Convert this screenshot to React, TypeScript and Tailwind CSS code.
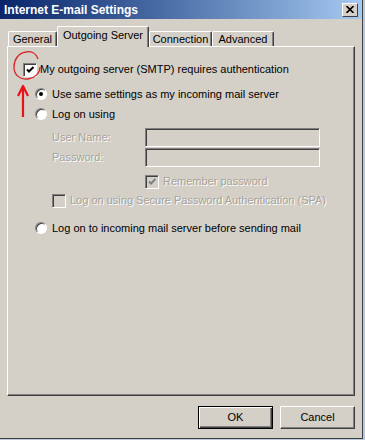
import React from 'react';

const font = { fontFamily: '"Liberation Sans", Arial, sans-serif' };

function CheckBox({ checked, disabled }: { checked?: boolean; disabled?: boolean }) {
  return (
    <div
      className={`relative w-[13px] h-[13px] shrink-0 border-t border-l border-[#808080] shadow-[inset_1px_1px_0_#404040,1px_1px_0_#fff] ${
        disabled ? 'bg-[#d4d0c8]' : 'bg-white'
      }`}
    >
      {checked && (
        <svg viewBox="0 0 12 12" className="absolute inset-0 w-[12px] h-[12px]">
          <path d="M3 5.5 L5 7.5 L9.5 3" stroke={disabled ? '#808080' : '#000'} strokeWidth="2" fill="none" />
        </svg>
      )}
    </div>
  );
}

function Radio({ checked }: { checked?: boolean }) {
  return (
    <div className="relative w-[12px] h-[12px] shrink-0 rounded-full bg-white border border-t-[#808080] border-l-[#808080] border-r-white border-b-white shadow-[inset_1px_1px_0_#404040]">
      {checked && <div className="absolute left-[3px] top-[3px] w-[4px] h-[4px] rounded-full bg-black" />}
    </div>
  );
}

function Field() {
  return (
    <div className="w-[175px] h-[19px] bg-[#d4d0c8] border-t border-l border-[#808080] border-r border-b border-r-white border-b-white shadow-[inset_1px_1px_0_#404040]" />
  );
}

function Tab({ label, w, active }: { label: string; w: string; active?: boolean }) {
  return (
    <div
      className={`${w} flex items-center justify-center border-t border-l border-white border-r border-r-[#404040] rounded-t-[2px] shadow-[inset_-1px_0_0_#808080] ${
        active ? 'h-[21px] -mb-[1px] bg-[#d4d0c8] relative z-10' : 'h-[15px] mt-[5px]'
      }`}
    >
      <span className={active ? 'pb-[3px]' : ''}>{label}</span>
    </div>
  );
}

const dis = 'text-[#a6a29a] [text-shadow:1px_1px_0_#fff]';

export default function App() {
  return (
    <div className="w-[365px] h-[440px] bg-[#b9c9dc] text-[11px] text-black" style={font}>
      <div className="relative w-[363px] h-[439px] bg-[#d4d0c8] border-r border-b border-[#404040] flex flex-col">
        <div className="h-[19px] flex items-center justify-between pl-[4px] pr-[4px] bg-gradient-to-r from-[#0a246a] to-[#a6caf0]">
          <span className="text-white font-bold text-[12px]">Internet E-mail Settings</span>
          <div className="w-[16px] h-[14px] bg-[#d4d0c8] border-t border-l border-white border-r border-b border-r-[#404040] border-b-[#404040] flex items-center justify-center">
            <svg viewBox="0 0 8 7" className="w-[8px] h-[7px]">
              <path d="M0.5 0 L7.5 7 M7.5 0 L0.5 7" stroke="#000" strokeWidth="1.6" />
            </svg>
          </div>
        </div>

        <div className="px-[7px] pt-[7px] flex flex-col">
          <div className="flex pl-[1px] h-[20px] items-start">
            <Tab label="General" w="w-[49px]" />
            <Tab label="Outgoing Server" w="w-[92px]" active />
            <Tab label="Connection" w="w-[63px]" />
            <Tab label="Advanced" w="w-[62px]" />
          </div>

          <div className="relative h-[350px] border-t border-l border-white border-r border-b border-r-[#404040] border-b-[#404040] shadow-[inset_-1px_-1px_0_#808080] pl-[15px] pt-[12px]">
            <div className="flex items-center h-[20px] gap-[4px]">
              <CheckBox checked />
              <span>My outgoing server (SMTP) requires authentication</span>
            </div>

            <div className="pl-[12px] mt-[5px]">
              <div className="flex items-center h-[20px] gap-[5px]">
                <Radio checked />
                <span>Use same settings as my incoming mail server</span>
              </div>
              <div className="flex items-center h-[20px] gap-[5px]">
                <Radio />
                <span>Log on using</span>
              </div>

              <div className="pl-[17px] mt-[3px]">
                <div className="flex items-center h-[20px]">
                  <span className={`w-[93px] ${dis}`}>User Name:</span>
                  <Field />
                </div>
                <div className="flex items-center h-[20px]">
                  <span className={`w-[93px] ${dis}`}>Password:</span>
                  <Field />
                </div>
                <div className="flex items-center h-[19px] gap-[5px] pl-[93px] mt-[5px]">
                  <CheckBox checked disabled />
                  <span className={dis}>Remember password</span>
                </div>
                <div className="flex items-center h-[19px] gap-[5px]">
                  <CheckBox disabled />
                  <span className={dis}>Log on using Secure Password Authentication (SPA)</span>
                </div>
              </div>

              <div className="flex items-center h-[20px] gap-[5px] mt-[8px]">
                <Radio />
                <span>Log on to incoming mail server before sending mail</span>
              </div>
            </div>

            <svg className="absolute left-0 top-[4px] w-[40px] h-[70px] overflow-visible" viewBox="0 0 40 70">
              <path
                d="M30 8 C28 2 23 0 18 1 C10 2 6 9 6 16 C6 24 12 29 20 28 C27 27 32 22 32 16"
                stroke="#d8242a"
                strokeWidth="1.3"
                fill="none"
              />
              <path d="M15 66 L15 37 M10 45 L15 35 L20 45" stroke="#e8101a" strokeWidth="2.2" fill="none" strokeLinejoin="round" />
            </svg>
          </div>

          <div className="flex justify-end gap-[7px] mt-[10px]">
            <button className="w-[75px] h-[23px] bg-[#d4d0c8] border border-black shadow-[inset_1px_1px_0_#fff,inset_-1px_-1px_0_#404040,inset_-2px_-2px_0_#808080]">
              OK
            </button>
            <button className="w-[75px] h-[23px] bg-[#d4d0c8] border-t border-l border-white border-r border-b border-r-[#404040] border-b-[#404040] shadow-[inset_-1px_-1px_0_#808080]">
              Cancel
            </button>
          </div>
        </div>
      </div>
    </div>
  );
}
